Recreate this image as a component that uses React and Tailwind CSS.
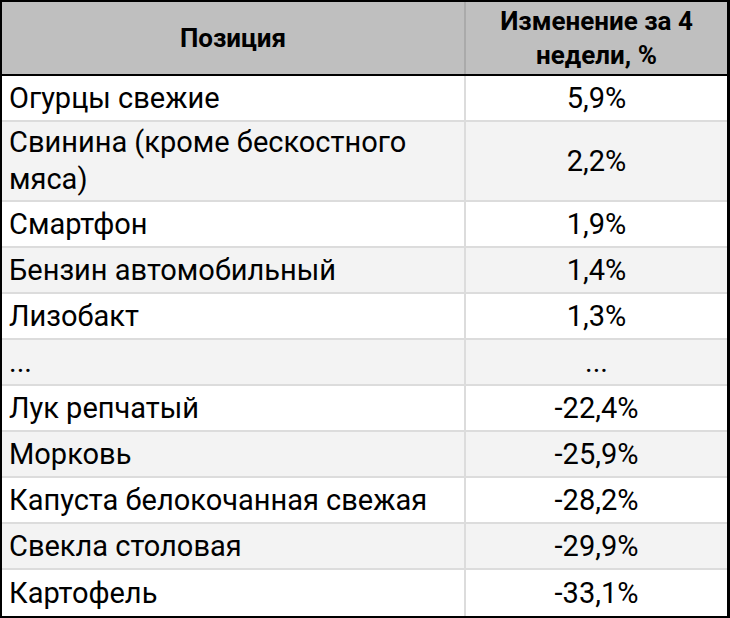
import React from 'react';

const rows = [
  { name: 'Огурцы свежие', value: '5,9%' },
  { name: 'Свинина (кроме бескостного мяса)', value: '2,2%', tall: true },
  { name: 'Смартфон', value: '1,9%' },
  { name: 'Бензин автомобильный', value: '1,4%' },
  { name: 'Лизобакт', value: '1,3%' },
  { name: '...', value: '...' },
  { name: 'Лук репчатый', value: '-22,4%' },
  { name: 'Морковь', value: '-25,9%' },
  { name: 'Капуста белокочанная свежая', value: '-28,2%' },
  { name: 'Свекла столовая', value: '-29,9%' },
  { name: 'Картофель', value: '-33,1%' },
];

export default function App() {
  return (
    <div className="w-[730px] h-[618px] bg-white font-['Roboto',sans-serif] text-black">
      <div className="h-full flex flex-col border-t-2 border-l-2 border-b-2 border-r-[3px] border-black">
        <div className="flex h-[74px] bg-[#bfbfbf] border-b-2 border-black font-bold text-[26px] leading-[34px]">
          <div className="w-[464px] flex items-center justify-center border-r-2 border-[#aaaaaa]">
            Позиция
          </div>
          <div className="flex-1 flex items-center justify-center text-center">
            Изменение за 4<br />недели, %
          </div>
        </div>
        {rows.map((r, i) => (
          <div
            key={i}
            className={
              'flex text-[29px] leading-[37px] ' +
              (r.tall ? 'h-[80px] ' : 'h-[46px] ') +
              (i % 2 === 1 ? 'bg-[#f3f3f3] ' : 'bg-white ') +
              (i < rows.length - 1 ? 'border-b-2 border-[#dcdcdc]' : '')
            }
          >
            <div className="w-[464px] flex items-center pl-[7px] pr-2 border-r-2 border-[#dcdcdc] whitespace-nowrap">
              {r.tall ? (
                <span>
                  Свинина (кроме бескостного
                  <br />
                  мяса)
                </span>
              ) : (
                r.name
              )}
            </div>
            <div className="flex-1 flex items-center justify-center">{r.value}</div>
          </div>
        ))}
      </div>
    </div>
  );
}
